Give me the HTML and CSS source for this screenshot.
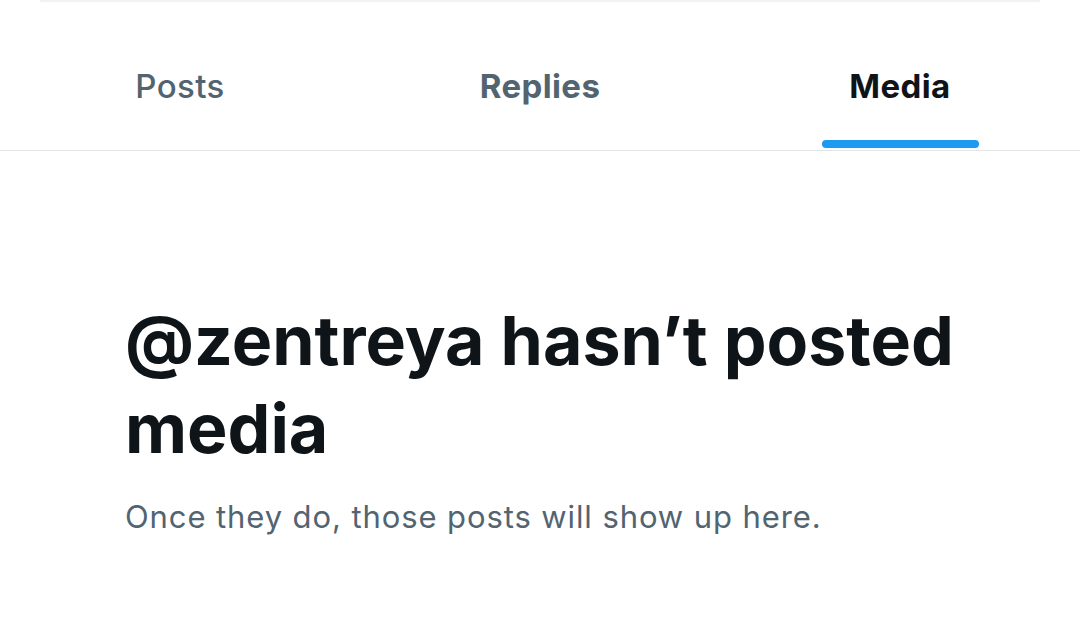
FILE: index.html
```html
<!DOCTYPE html>
<html lang="en">
<head>
<meta charset="utf-8">
<link rel="stylesheet" href="styles.css">
</head>
<body>
<div class="topline"></div>
<nav class="tabs">
  <div class="tab"><span class="label posts">Posts</span><span class="indicator"></span></div>
  <div class="tab"><span class="label replies">Replies</span><span class="indicator"></span></div>
  <div class="tab active"><span class="label">Media</span><span class="indicator"></span></div>
</nav>
<main class="empty">
  <h1 class="empty-title">@zentreya hasn’t posted media</h1>
  <p class="empty-sub">Once they do, those posts will show up here.</p>
</main>
</body>
</html>
```
FILE: styles.css
```css
html, body {
  margin: 0;
  padding: 0;
  background: #ffffff;
}
body {
  font-family: Inter, "Noto Sans", Roboto, sans-serif;
  color: #0f1419;
  width: 1080px;
  height: 617px;
  overflow: hidden;
}
.topline {
  height: 2px;
  margin: 0 40px;
  background: #f1f2f2;
  box-shadow: 0 0 2px rgba(0,0,0,0.05);
}
.tabs {
  display: grid;
  grid-template-columns: repeat(3, 1fr);
  height: 148px;
  border-bottom: 1px solid #e3e6e8;
}
.tab {
  display: flex;
  flex-direction: column;
  align-items: center;
}
.label {
  margin-top: 64px;
  font-size: 33px;
  line-height: 40px;
  letter-spacing: 0.4px;
  font-weight: 700;
  color: #536471;
}
.label.posts {
  font-weight: 500;
}
.indicator {
  margin-top: auto;
  margin-bottom: 2px;
  height: 8px;
  width: 157px;
  border-radius: 4px;
  background: transparent;
}
.tab.active .label {
  color: #0f1419;
}
.tab.active .indicator {
  background: #1d9bf0;
}
.empty {
  padding: 0 100px 0 125px;
}
.empty-title {
  margin: 145px 0 0 0;
  font-size: 68px;
  line-height: 88px;
  font-weight: 700;
  color: #0f1419;
}
.empty-sub {
  margin: 25px 0 0 0;
  font-size: 31px;
  line-height: 40px;
  letter-spacing: 0.9px;
  font-weight: 400;
  color: #536471;
}
```
